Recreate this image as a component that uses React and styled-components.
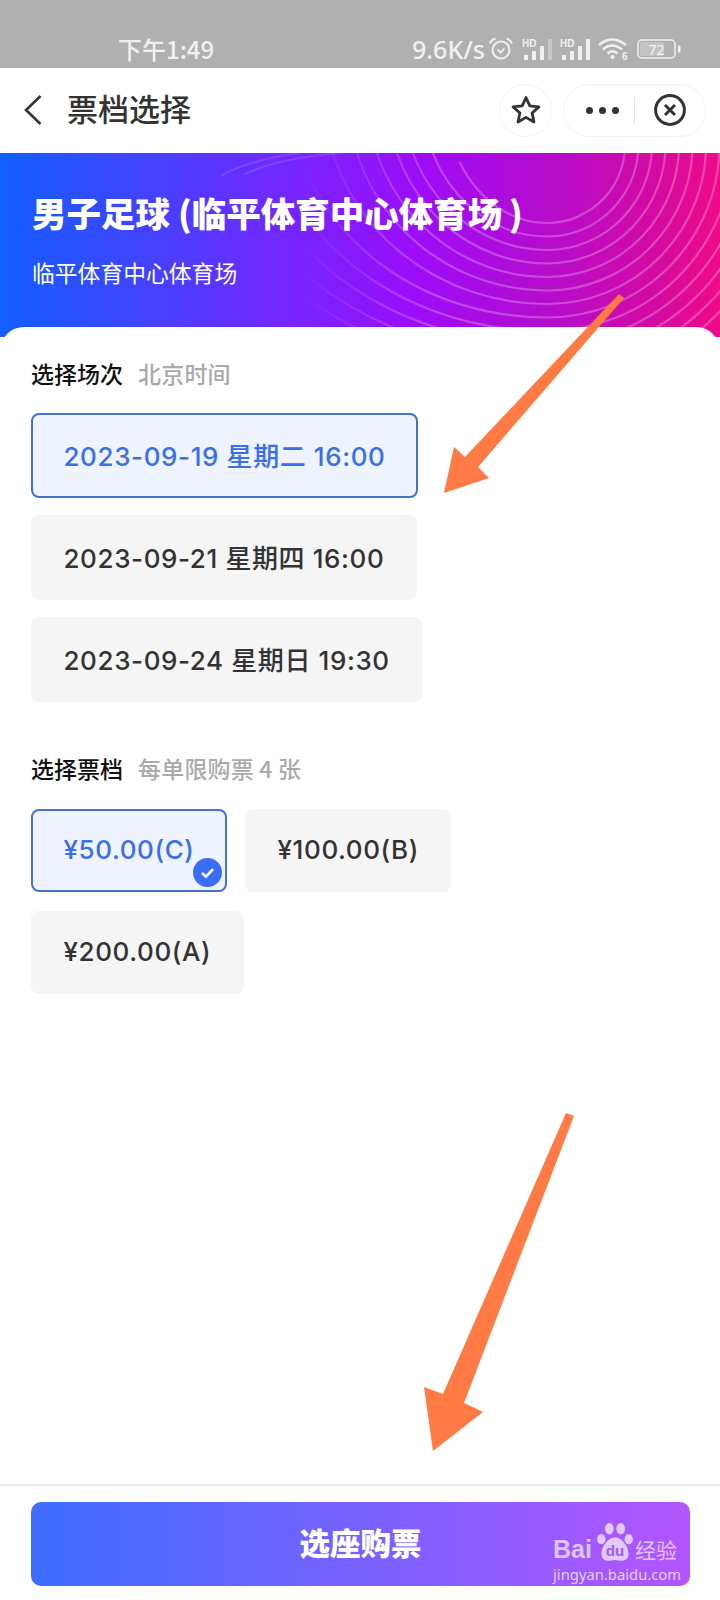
import React from "react";
import styled, { createGlobalStyle } from "styled-components";

const FONT = `"Inter", "Noto Sans CJK SC", sans-serif`;
const CJK = `"Noto Sans CJK SC", "Noto Sans", sans-serif`;

const Global = createGlobalStyle`
  html, body { margin: 0; padding: 0; background: #fff; }
  * { box-sizing: border-box; }
`;

const Page = styled.div`
  position: relative;
  width: 720px;
  height: 1600px;
  display: flex;
  flex-direction: column;
  overflow: hidden;
  font-family: ${FONT};
  background: #fff;
`;

const StatusBar = styled.div`
  height: 68px;
  flex: none;
  background: #b0b0b0;
  display: flex;
  align-items: flex-start;
  justify-content: space-between;
  padding: 33px 39px 0 118px;
  color: #f0f0f0;
`;
const Time = styled.div`
  font-size: 24px;
  line-height: 32px;
  font-weight: 500;
  font-family: ${CJK};
`;
const StatusRight = styled.div`
  display: flex;
  align-items: center;
  height: 32px;
`;
const Speed = styled.div`
  font-family: "Noto Sans", sans-serif;
  font-size: 25px;
  line-height: 32px;
  font-weight: 500;
  margin-right: 3px;
`;
const IconGap = styled.span`
  flex: none;
  width: ${(p) => p.$w}px;
`;

const Nav = styled.div`
  height: 85px;
  flex: none;
  background: #fff;
  display: flex;
  align-items: center;
  padding: 0 14px 1px 24px;
`;
const NavTitle = styled.div`
  font-family: ${CJK};
  font-size: 31px;
  line-height: 40px;
  font-weight: 500;
  color: #333;
  margin: 0 0 5px 25px;
  flex: 1;
`;
const RoundBtn = styled.div`
  width: 53px;
  height: 53px;
  border-radius: 50%;
  border: 1px solid #f3f3f3;
  display: flex;
  align-items: center;
  justify-content: center;
  margin-right: 11px;
`;
const Capsule = styled.div`
  width: 143px;
  height: 53px;
  border-radius: 27px;
  border: 1px solid #f3f3f3;
  display: flex;
  align-items: center;
  padding-left: 22px;
`;
const Dots = styled.div`
  display: flex;
  gap: 6px;
`;
const Dot = styled.span`
  width: 7px;
  height: 7px;
  border-radius: 50%;
  background: #333;
`;
const CapDivider = styled.span`
  width: 1px;
  height: 27px;
  background: #e4e4e4;
  margin: 0 19px 0 15px;
`;

const Hero = styled.div`
  position: relative;
  height: 184px;
  flex: none;
  padding: 37px 31px 0 32px;
  background: linear-gradient(90deg, #105fff 0%, #6a2cff 36%, #9d0cf8 58%, #b80cc8 78%, #d60aa0 92%, #f00a88 100%);
  overflow: hidden;
`;
const HeroLines = styled.svg`
  position: absolute;
  left: 0;
  top: 0;
`;
const HeroTitle = styled.h1`
  position: relative;
  margin: 0;
  font-family: ${CJK};
  font-size: 34.5px;
  line-height: 44px;
  font-weight: 900;
  color: #fff;
  white-space: nowrap;
`;
const HeroSub = styled.div`
  position: relative;
  margin-top: 23px;
  font-family: ${CJK};
  font-size: 22.8px;
  line-height: 32px;
  color: #fff;
`;

const Card = styled.div`
  position: relative;
  margin-top: -10px;
  flex: 1;
  background: #fff;
  border-radius: 24px 24px 0 0;
  padding: 31px 0 0 31px;
`;
const SectionHead = styled.div`
  display: flex;
  align-items: center;
  gap: 15px;
  height: 30px;
  font-family: ${CJK};
  font-size: 23px;
`;
const SectionTitle = styled.span`
  font-weight: 500;
  color: #111;
`;
const SectionNote = styled.span`
  color: #aaa;
  font-weight: 500;
  letter-spacing: 0.2px;
`;
const Sessions = styled.div`
  display: flex;
  flex-direction: column;
  align-items: flex-start;
  gap: 17px;
  margin: 25px 0 51px;
`;
const Tickets = styled.div`
  display: flex;
  flex-wrap: wrap;
  gap: 19px 18px;
  max-width: 500px;
  margin-top: 26px;
`;
const Choice = styled.div`
  position: relative;
  display: inline-flex;
  align-items: center;
  height: ${(p) => p.$h}px;
  padding: 0 30.5px 3px;
  border-radius: 8px;
  font-size: 26px;
  font-weight: 500;
  letter-spacing: 0.6px;
  white-space: nowrap;
  color: ${(p) => (p.$active ? "#3a6fe8" : "#333")};
  background: ${(p) => (p.$active ? "#eef3fe" : "#f5f5f5")};
  border: ${(p) => (p.$active ? "2px solid #4472d0" : "2px solid transparent")};
`;
const Check = styled.svg`
  position: absolute;
  right: 3px;
  bottom: 3px;
`;

const Footer = styled.div`
  flex: none;
  height: 116px;
  border-top: 2px solid #e8e8e8;
  padding: 16px 30px 14px 31px;
`;
const BuyButton = styled.div`
  position: relative;
  height: 84px;
  padding-bottom: 4px;
  border-radius: 10px;
  background: linear-gradient(90deg, #3d6dff 0%, #b355ff 100%);
  display: flex;
  align-items: center;
  justify-content: center;
  font-family: ${CJK};
  font-size: 30.5px;
  font-weight: 900;
  color: #fff;
`;
const Watermark = styled.div`
  position: absolute;
  left: 522px;
  top: 29px;
  width: 132px;
  color: rgba(255, 255, 255, 0.68);
`;
const MarkRow = styled.div`
  display: flex;
  align-items: flex-end;
  height: 30px;
`;
const MarkBai = styled.span`
  font-family: "Liberation Sans", sans-serif;
  font-size: 25px;
  line-height: 24px;
  font-weight: 700;
  margin-right: 5px;
`;
const MarkJing = styled.span`
  font-family: ${CJK};
  font-size: 21px;
  line-height: 24px;
  font-weight: 400;
  margin-left: 2px;
`;
const MarkUrl = styled.div`
  font-family: "Noto Sans", sans-serif;
  font-size: 14.8px;
  line-height: 20px;
  font-weight: 400;
  margin-top: 3px;
  white-space: nowrap;
  color: rgba(255, 255, 255, 0.72);
`;
const Arrows = styled.svg`
  position: absolute;
  left: 0;
  top: 0;
  pointer-events: none;
`;

const sessions = [
  { label: "2023-09-19 星期二 16:00", active: true },
  { label: "2023-09-21 星期四 16:00" },
  { label: "2023-09-24 星期日 19:30" },
];
const tickets = [
  { label: "¥50.00(C)", active: true },
  { label: "¥100.00(B)" },
  { label: "¥200.00(A)" },
];

const TOPS = [460, 433, 413, 397, 377, 357, 333, 300, 275, 250, 225, 200, 175];
const heroPaths = () =>
  TOPS.map((xT, k) => {
    const r = 78 + 13.5 * k;
    const yb = 145 + r;
    const xR = 547 + Math.sqrt(r * r - 25);
    const cy = 95;
    const ry = yb - cy;
    const yRef = k === 0 ? 163 : 153;
    const rx = (547 - xT) / Math.sqrt(1 - ((yRef - cy) / ry) ** 2);
    const yEnd = k === 0 ? 163 : 130;
    const xEnd = 547 - rx * Math.sqrt(1 - ((yEnd - cy) / ry) ** 2);
    return `M${xR} 140A${r} ${r} 0 0 1 547 ${yb}A${rx} ${ry} 0 0 1 ${xEnd} ${yEnd}`;
  });

const HeroArt = () => (
  <HeroLines width="720" height="184" viewBox="0 153 720 184">
    <defs>
      <linearGradient id="fade" gradientUnits="userSpaceOnUse" x1="300" x2="430" y1="0" y2="0">
        <stop offset="0" stopColor="#fff" stopOpacity="0" />
        <stop offset="1" stopColor="#fff" stopOpacity="1" />
      </linearGradient>
      <mask id="fadeMask" maskUnits="userSpaceOnUse" x="0" y="100" width="720" height="300">
        <rect x="0" y="100" width="720" height="300" fill="url(#fade)" />
      </mask>
    </defs>
    <g fill="none" stroke="#fff" strokeOpacity="0.25" strokeWidth="2.2" strokeLinecap="round">
      <g mask="url(#fadeMask)">
        {heroPaths().map((d) => (
          <path key={d} d={d} />
        ))}
      </g>
      <path d="M222 175Q250 160 300 153" strokeOpacity="0.12" />
      <path d="M245 174Q280 158 340 153" strokeOpacity="0.12" />
    </g>
  </HeroLines>
);

const Alarm = () => (
  <svg width="26" height="24" viewBox="0 0 26 24" fill="none" stroke="#f0f0f0" strokeWidth="2">
    <circle cx="13" cy="13" r="8.5" />
    <path d="M9.5 12.5l3.2 3 3.8-3.8" strokeWidth="1.8" />
    <path d="M2 6.5Q3.5 2.5 7.5 1.5M24 6.5Q22.5 2.5 18.5 1.5" />
  </svg>
);

const Signal = ({ dim }) => (
  <svg width="33" height="22" viewBox="0 0 33 22" fill="#f0f0f0">
    <text x="0" y="9" fontSize="10" fontWeight="700" fontFamily="Liberation Sans, sans-serif">HD</text>
    <rect x="2" y="17" width="4" height="5" />
    <rect x="10" y="13" width="4" height="9" />
    <rect x="18" y="8" width="4" height="14" />
    <rect x="26" y="1" width="4" height="21" opacity={dim ? 0.4 : 1} />
  </svg>
);

const Wifi = () => (
  <svg width="32" height="26" viewBox="0 0 32 26" fill="none" stroke="#f0f0f0" strokeWidth="2.4">
    <path d="M1 9Q14 -2 28 9M5 13.5Q14 5.5 24 13.5M9.5 17.5Q14.5 13 19.5 17.5" />
    <circle cx="14.5" cy="21" r="2" fill="#f0f0f0" stroke="none" />
    <text x="24" y="24" fontSize="10" fontWeight="700" fill="#f0f0f0" stroke="none" fontFamily="Liberation Sans, sans-serif">6</text>
  </svg>
);

const Battery = () => (
  <svg width="44" height="20" viewBox="0 0 44 20">
    <rect x="1" y="1" width="37" height="18" rx="4" fill="none" stroke="#f0f0f0" strokeWidth="1.5" />
    <rect x="3" y="3" width="24" height="14" rx="2" fill="#c4c4c4" />
    <text x="19.5" y="15.5" textAnchor="middle" fontSize="14" fontFamily="Noto Sans, sans-serif" fill="#f4f4f4">72</text>
    <rect x="41" y="6.5" width="2.5" height="7" rx="1" fill="#f0f0f0" />
  </svg>
);

const Paw = () => (
  <svg width="36" height="38" viewBox="0 0 38 40" fill="rgba(255,255,255,0.68)">
    <ellipse cx="13" cy="6" rx="4.6" ry="6" />
    <ellipse cx="25" cy="6" rx="4.6" ry="6" />
    <ellipse cx="4.5" cy="17" rx="4.4" ry="5.4" />
    <ellipse cx="33.5" cy="17" rx="4.4" ry="5.4" />
    <path d="M19 15C27 15 35 27 33 35C31 41 25 40 19 39C13 40 7 41 5 35C3 27 11 15 19 15Z" />
    <text x="19" y="35" textAnchor="middle" fontSize="16" fontWeight="700" fontFamily="Liberation Sans, sans-serif" fill="#9a5cff">du</text>
  </svg>
);

export default function App() {
  return (
    <Page>
      <Global />
      <StatusBar>
        <Time>下午1:49</Time>
        <StatusRight>
          <Speed>9.6K/s</Speed>
          <Alarm />
          <IconGap $w={8} />
          <Signal dim />
          <IconGap $w={5} />
          <Signal />
          <IconGap $w={5} />
          <Wifi />
          <IconGap $w={7} />
          <Battery />
        </StatusRight>
      </StatusBar>
      <Nav>
        <svg width="18" height="30" viewBox="0 0 18 30" fill="none" stroke="#333" strokeWidth="2.6">
          <path d="M16.5 1L2 15l14.5 14" />
        </svg>
        <NavTitle>票档选择</NavTitle>
        <RoundBtn>
          <svg width="30" height="30" viewBox="0 0 30 30" fill="none" stroke="#333" strokeWidth="2.8" strokeLinejoin="round">
            <path d="M15 2.5l3.8 8.4 9.1 1-6.8 6.1 1.9 9-8-4.6-8 4.6 1.9-9-6.8-6.1 9.1-1z" />
          </svg>
        </RoundBtn>
        <Capsule>
          <Dots>
            <Dot />
            <Dot />
            <Dot />
          </Dots>
          <CapDivider />
          <svg width="32" height="32" viewBox="0 0 32 32" fill="none" stroke="#333">
            <circle cx="16" cy="16" r="14.4" strokeWidth="3" />
            <path d="M11 11l10 10M21 11L11 21" strokeWidth="3" />
          </svg>
        </Capsule>
      </Nav>
      <Hero>
        <HeroArt />
        <HeroTitle>男子足球 (临平体育中心体育场&#8201;)</HeroTitle>
        <HeroSub>临平体育中心体育场</HeroSub>
      </Hero>
      <Card>
        <SectionHead>
          <SectionTitle>选择场次</SectionTitle>
          <SectionNote>北京时间</SectionNote>
        </SectionHead>
        <Sessions>
          {sessions.map((s) => (
            <Choice key={s.label} $h={85} $active={s.active}>
              {s.label}
            </Choice>
          ))}
        </Sessions>
        <SectionHead>
          <SectionTitle>选择票档</SectionTitle>
          <SectionNote>每单限购票 4 张</SectionNote>
        </SectionHead>
        <Tickets>
          {tickets.map((t) => (
            <Choice key={t.label} $h={83} $active={t.active}>
              {t.label}
              {t.active && (
                <Check width="29" height="29" viewBox="0 0 29 29">
                  <circle cx="14.5" cy="14.5" r="14.5" fill="#3a6ef5" />
                  <path d="M9 15l4 3.6 7-7.4" fill="none" stroke="#fff" strokeWidth="2.6" />
                </Check>
              )}
            </Choice>
          ))}
        </Tickets>
      </Card>
      <Footer>
        <BuyButton>
          选座购票
          <Watermark>
            <MarkRow>
              <MarkBai>Bai</MarkBai>
              <Paw />
              <MarkJing>经验</MarkJing>
            </MarkRow>
            <MarkUrl>jingyan.baidu.com</MarkUrl>
          </Watermark>
        </BuyButton>
      </Footer>
      <Arrows width="720" height="1600" viewBox="0 0 720 1600" fill="#ff7a45">
        <path d="M619 294L624 298L478 467L489 478L444 493L454 447L465 457Z" />
        <path d="M566 1113L574 1116L464 1403L483 1412L433 1451L424 1387L443 1394Z" />
      </Arrows>
    </Page>
  );
}
